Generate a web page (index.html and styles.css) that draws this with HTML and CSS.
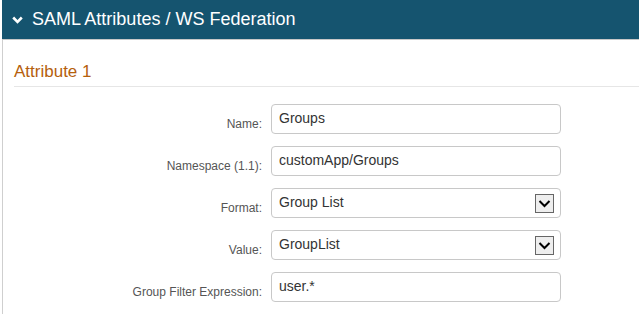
FILE: index.html
```html
<!DOCTYPE html>
<html>
<head>
<meta charset="utf-8">
<link rel="stylesheet" href="styles.css">
</head>
<body>
<div class="panel">
  <div class="panel-header">
    <svg class="chev" width="11" height="8" viewBox="0 0 11 8"><path d="M1.2 1.5 L5.5 5.8 L9.8 1.5" fill="none" stroke="#fff" stroke-width="2.6"/></svg>
    <span class="panel-title">SAML Attributes / WS Federation</span>
  </div>
  <div class="panel-body">
    <h2 class="section-title">Attribute 1</h2>
    <div class="form">
      <div class="row">
        <label class="lbl">Name:</label>
        <div class="field">Groups</div>
      </div>
      <div class="row">
        <label class="lbl">Namespace (1.1):</label>
        <div class="field">customApp/Groups</div>
      </div>
      <div class="row">
        <label class="lbl">Format:</label>
        <div class="field select">Group List
          <span class="sel-btn"><svg width="13" height="9" viewBox="0 0 13 9"><path d="M1.5 2 L6.5 7 L11.5 2" fill="none" stroke="#000" stroke-width="2"/></svg></span>
        </div>
      </div>
      <div class="row">
        <label class="lbl">Value:</label>
        <div class="field select">GroupList
          <span class="sel-btn"><svg width="13" height="9" viewBox="0 0 13 9"><path d="M1.5 2 L6.5 7 L11.5 2" fill="none" stroke="#000" stroke-width="2"/></svg></span>
        </div>
      </div>
      <div class="row">
        <label class="lbl">Group Filter Expression:</label>
        <div class="field">user.*</div>
      </div>
    </div>
  </div>
</div>
</body>
</html>
```

FILE: styles.css
```css
html, body {
  margin: 0;
  padding: 0;
  background: #fff;
  font-family: "Liberation Sans", Arial, sans-serif;
}
.panel {
  margin-left: 2px;
  width: 637px;
  height: 314px;
  overflow: hidden;
}
.panel-header {
  height: 40px;
  background: #15546f;
  border-bottom: 1px solid #c8c8c8;
  display: flex;
  align-items: center;
  box-sizing: border-box;
  padding-left: 10px;
  padding-bottom: 1px;
}
.chev {
  display: block;
  margin-right: 9px;
  margin-top: 1px;
}
.panel-title {
  color: #fff;
  font-size: 18px;
}
.panel-body {
  border-left: 1px solid #cfcfcf;
  height: 274px;
  padding-left: 11px;
}
.section-title {
  margin: 0;
  padding-top: 21px;
  font-weight: normal;
  font-size: 17px;
  color: #b5600c;
  line-height: 22px;
  padding-bottom: 3px;
  border-bottom: 1px solid #e6e6e6;
}
.form {
  display: flex;
  flex-direction: column;
  gap: 12px;
  padding-top: 17px;
}
.row {
  display: flex;
  align-items: flex-start;
}
.lbl {
  width: 248px;
  text-align: right;
  font-size: 12px;
  color: #555;
  padding-top: 13px;
  margin-right: 9px;
}
.field {
  position: relative;
  width: 290px;
  height: 30px;
  box-sizing: border-box;
  border: 1px solid #c8c8c8;
  border-radius: 4px;
  font-size: 14px;
  color: #333;
  padding-left: 7px;
  line-height: 26px;
}
.sel-btn {
  position: absolute;
  right: 6px;
  top: 5px;
  width: 19px;
  height: 19px;
  box-sizing: border-box;
  border: 1px solid #666;
  background: #eee;
  display: flex;
  align-items: center;
  justify-content: center;
}
.sel-btn svg {
  display: block;
}
```
